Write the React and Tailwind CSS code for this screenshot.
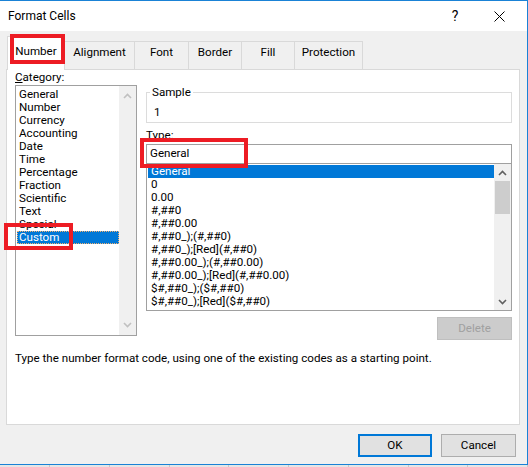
import React from 'react';

const categories = [
  'General', 'Number', 'Currency', 'Accounting', 'Date', 'Time',
  'Percentage', 'Fraction', 'Scientific', 'Text', 'Special', 'Custom',
];

const formats = [
  'General', '0', '0.00', '#,##0', '#,##0.00', '#,##0_);(#,##0)',
  '#,##0_);[Red](#,##0)', '#,##0.00_);(#,##0.00)', '#,##0.00_);[Red](#,##0.00)',
  '$#,##0_);($#,##0)', '$#,##0_);[Red]($#,##0)',
];

const tabs = [
  { label: 'Alignment', w: 'w-[70px]' },
  { label: 'Font', w: 'w-[54px]' },
  { label: 'Border', w: 'w-[53px]' },
  { label: 'Fill', w: 'w-[53px]' },
  { label: 'Protection', w: 'w-[68px]' },
];

const Chevron = ({ up, color }) => (
  <svg width="9" height="6" viewBox="0 0 9 6" className="block">
    <path
      d={up ? 'M1 5 L4.5 1.5 L8 5' : 'M1 1 L4.5 4.5 L8 1'}
      fill="none"
      stroke={color}
      strokeWidth="1.6"
    />
  </svg>
);

const App = () => {
  return (
    <div className="relative w-[528px] h-[467px] bg-[#f0f0f0] overflow-hidden font-['Roboto','Liberation_Sans',sans-serif] text-[11.6px] text-black">
      <div className="h-[465px] flex flex-col border-t border-r border-b border-[#1a82d6]">
        {/* title bar */}
        <div className="h-[30px] bg-white flex items-center shrink-0">
          <span className="pl-[8px] leading-[14px] text-[12px]">Format Cells</span>
          <div className="ml-auto flex items-center h-full">
            <div className="w-[42px] text-center text-[14px] leading-[16px]">?</div>
            <div className="w-[46px] mr-[5px] flex justify-center">
              <svg width="11" height="11" viewBox="0 0 11 11">
                <path d="M0.5 0.5 L10.5 10.5 M10.5 0.5 L0.5 10.5" stroke="#000" strokeWidth="1" />
              </svg>
            </div>
          </div>
        </div>

        {/* body */}
        <div className="flex-1 flex flex-col pt-[5px]">
          <div className="h-[33px] flex items-end pl-[7px]">
            <div className="relative z-10 h-[34px] -mb-px w-[58px] bg-white border-l border-t border-r border-[#d9d9d9] flex items-center justify-center pb-[4px]">
              Number
            </div>
            {tabs.map((t) => (
              <div
                key={t.label}
                className={`${t.w} h-[28px] border-t border-r border-[#d9d9d9] flex items-center justify-center pb-[5px]`}
              >
                {t.label}
              </div>
            ))}
          </div>

          <div className="relative ml-[6px] w-[514px] h-[356px] bg-white border border-[#d9d9d9] flex flex-col pl-[8px]">
            <div className="flex items-start">
              {/* category column */}
              <div className="flex flex-col w-[122px]">
                <div className="h-[15px] leading-[15px]">
                  <span className="underline">C</span>ategory:
                </div>
                <div className="h-[251px] border border-[#a0a0a0] flex">
                  <div className="flex-1 pt-[2px] pl-[1px]">
                    {categories.map((c) => (
                      <div
                        key={c}
                        className={
                          c === 'Custom'
                            ? 'h-[13px] leading-[13px] px-[2px] bg-[#0078d7] text-white outline-1 outline-dotted outline-[#f0b070] -outline-offset-1'
                            : 'h-[13px] leading-[13px] px-[2px]'
                        }
                      >
                        {c}
                      </div>
                    ))}
                  </div>
                  <div className="w-[17px] bg-[#f0f0f0] flex flex-col items-center justify-between py-[7px]">
                    <Chevron up color="#c0c0c0" />
                    <Chevron color="#c0c0c0" />
                  </div>
                </div>
              </div>

              {/* type column */}
              <div className="ml-[9px] w-[366px] flex flex-col">
                <div className="relative mt-[22px] h-[31px] border border-[#dcdcdc]">
                  <span className="absolute -top-[8px] left-[3px] px-[2px] bg-white leading-[14px]">Sample</span>
                  <div className="pl-[7px] pt-[13px] leading-[13px]">1</div>
                </div>
                <div className="mt-[5px] h-[14px] leading-[14px]">Type:</div>
                <div className="mt-[2px] h-[20px] border border-[#a0a0a0] flex items-center pl-[3px]">
                  General
                </div>
                <div className="h-[147px] border-l border-r border-b border-[#a0a0a0] flex overflow-hidden">
                  <div className="flex-1 pt-[1px] pl-[1px]">
                    {formats.map((f, i) => (
                      <div
                        key={f}
                        className={
                          i === 0
                            ? 'h-[13px] leading-[13px] px-[3px] bg-[#0078d7] text-white'
                            : 'h-[13px] leading-[13px] px-[3px] whitespace-nowrap'
                        }
                      >
                        {f}
                      </div>
                    ))}
                  </div>
                  <div className="w-[17px] bg-[#f0f0f0] flex flex-col">
                    <div className="h-[17px] flex items-center justify-center">
                      <Chevron up color="#606060" />
                    </div>
                    <div className="h-[33px] bg-[#cdcdcd] mx-[1px]" />
                    <div className="mt-auto h-[17px] flex items-center justify-center">
                      <Chevron color="#606060" />
                    </div>
                  </div>
                </div>
                <div className="mt-[6px] self-end w-[75px] h-[23px] bg-[#cccccc] border border-[#bfbfbf] flex items-center justify-center text-[#a0a0a0]">
                  Delete
                </div>
              </div>
            </div>

            <div className="mt-[11px] leading-[14px]">
              Type the number format code, using one of the existing codes as a starting point.
            </div>

            {/* annotation boxes */}
            <div className="absolute left-[-3px] top-[153px] w-[69px] h-[27px] border-4 border-[#ed1c24]" />
            <div className="absolute left-[133px] top-[68px] w-[108px] h-[30px] border-4 border-[#ed1c24]" />
          </div>

          <div className="mt-[9px] flex justify-end gap-[9px] pr-[11px]">
            <div className="w-[74px] h-[23px] bg-[#e1e1e1] border-2 border-[#0078d7] flex items-center justify-center">
              OK
            </div>
            <div className="w-[75px] h-[23px] bg-[#e1e1e1] border border-[#adadad] flex items-center justify-center">
              Cancel
            </div>
          </div>
        </div>
      </div>
      <div className="h-[2px] flex bg-[#e6e6e6]">
        <div className="w-[53px] border-r border-[#c6c6c6]" />
        {[0, 1, 2, 3, 4, 5, 6, 7].map((i) => (
          <div key={i} className="w-[63px] border-r border-[#c6c6c6]" />
        ))}
      </div>
      {/* tab annotation */}
      <div className="absolute left-[10px] top-[34px] w-[55px] h-[30px] border-4 border-[#ed1c24] z-20" />
    </div>
  );
};

export default App;
